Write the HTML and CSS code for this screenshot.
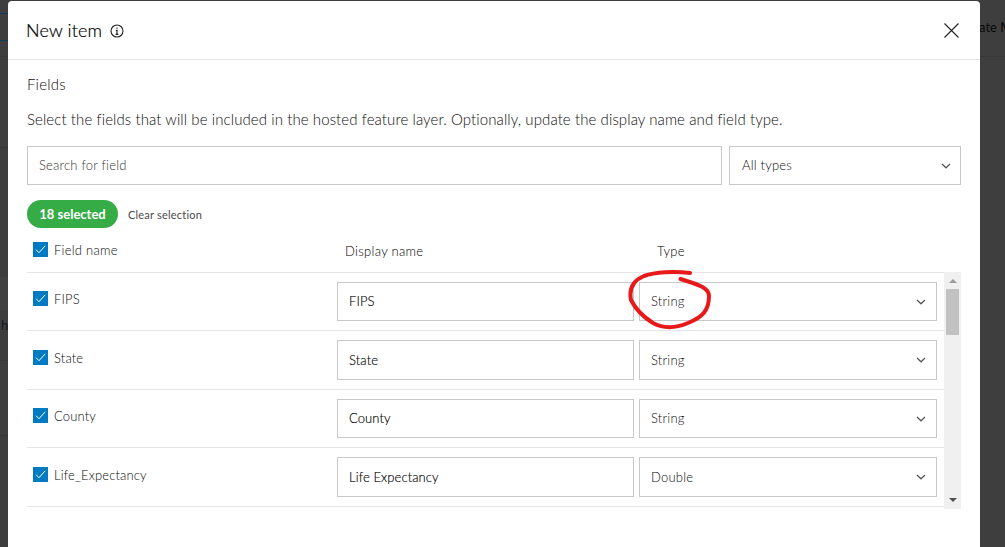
FILE: index.html
```html
<!DOCTYPE html>
<html lang="en">
<head>
<meta charset="utf-8">
<title>New item</title>
<link rel="stylesheet" href="styles.css">
</head>
<body>
<svg class="defs" width="0" height="0">
  <symbol id="chevron" viewBox="0 0 10 6"><path d="M1 1l4 3.8L9 1" fill="none" stroke="#555" stroke-width="1.2"/></symbol>
  <symbol id="check" viewBox="0 0 15 15"><path d="M3 7.7l3 3L12.2 3.8" fill="none" stroke="#fff" stroke-width="1"/></symbol>
</svg>
<div class="page">
  <div class="backdrop-left">
    <i class="rule blue r1"></i><i class="rule blue r2"></i><i class="rule r3"></i><i class="rule r4"></i>
    <i class="band"></i><span class="peek">h</span>
    <i class="rule r5"></i><i class="rule r6"></i>
  </div>
  <main class="modal">
    <header class="head">
      <h1 class="title">New item</h1>
      <svg class="info" width="14" height="14" viewBox="0 0 14 14"><circle cx="7" cy="7" r="6" fill="none" stroke="#222" stroke-width="1.1"/><path d="M7 3.4v1.4M5.800 6.400H7v4M5.600 10.400h2.800" fill="none" stroke="#222" stroke-width="1.2"/></svg>
      <svg class="close" width="15" height="15" viewBox="0 0 15 15"><path d="M.5.5l14 14M14.500.5l-14 14" stroke="#222" stroke-width="1.1"/></svg>
    </header>
    <section class="body">
      <h2 class="subtitle">Fields</h2>
      <p class="desc">Select the fields that will be included in the hosted feature layer. Optionally, update the display name and field type.</p>
      <div class="filters">
        <div class="box search"><span>Search for field</span></div>
        <div class="box types"><span>All types</span><svg class="chev" width="10" height="6"><use href="#chevron"/></svg></div>
      </div>
      <div class="selection"><span class="pill"><span>18 selected</span></span><span class="clear">Clear selection</span></div>
      <div class="cols">
        <div class="name"><span class="cb"><svg width="15" height="15"><use href="#check"/></svg></span><span class="label">Field name</span></div>
        <span class="col-display">Display name</span><span class="col-type">Type</span>
      </div>
      <div class="list">
        <div class="rows">
          <div class="row"><div class="name"><span class="cb"><svg width="15" height="15"><use href="#check"/></svg></span><span>FIPS</span></div><div class="box display"><span>FIPS</span></div><div class="box kind"><span>String</span><svg class="chev" width="10" height="6"><use href="#chevron"/></svg></div></div>
          <div class="row"><div class="name"><span class="cb"><svg width="15" height="15"><use href="#check"/></svg></span><span>State</span></div><div class="box display"><span>State</span></div><div class="box kind"><span>String</span><svg class="chev" width="10" height="6"><use href="#chevron"/></svg></div></div>
          <div class="row"><div class="name"><span class="cb"><svg width="15" height="15"><use href="#check"/></svg></span><span>County</span></div><div class="box display"><span>County</span></div><div class="box kind"><span>String</span><svg class="chev" width="10" height="6"><use href="#chevron"/></svg></div></div>
          <div class="row"><div class="name"><span class="cb"><svg width="15" height="15"><use href="#check"/></svg></span><span>Life_Expectancy</span></div><div class="box display"><span>Life Expectancy</span></div><div class="box kind"><span>Double</span><svg class="chev" width="10" height="6"><use href="#chevron"/></svg></div></div>
        </div>
        <div class="scrollbar"><i class="arrow up"></i><i class="thumb"></i><i class="arrow down"></i></div>
      </div>
    </section>
  </main>
  <div class="backdrop-right"><span class="create">ate M</span><i class="rule r3"></i></div>
</div>
<svg class="marker" width="90" height="66" viewBox="625 266 90 66"><path d="M690 273C674 271 655 272 644 276C632 281 629 290 631 300C636 310 645 318 653 323C664 329 676 328 688 323C703 317 709 310 709 296C709 288 700 285 680.500 279" fill="none" stroke="#e8191b" stroke-width="4" stroke-linecap="round" stroke-linejoin="round"/></svg>
</body>
</html>
```
FILE: styles.css
```css
* { box-sizing: border-box; }
body { margin: 0; overflow: hidden; font-family: Lato, "Open Sans", sans-serif; font-size: 13px; font-weight: 300; color: #0c0c0c; }
.defs { position: absolute; }
.page { display: flex; width: 1005px; height: 547px; background: #3e3e3e; }
.backdrop-left { position: relative; width: 8px; flex: none; overflow: hidden; }
.backdrop-right { position: relative; width: 25px; flex: none; overflow: hidden; }
.rule { position: absolute; left: 0; right: 0; height: 1px; background: #383838; }
.blue { background: #123c58; }
.r1 { top: 13px; } .r2 { top: 40px; } .r3 { top: 56px; } .r4 { top: 147px; } .r5 { top: 360px; } .r6 { top: 435px; }
.band { position: absolute; left: 0; right: 0; top: 277px; height: 33px; background: #414141; }
.peek { position: absolute; left: 1px; top: 317px; line-height: 16px; font-weight: 400; color: #111923; }
.create { position: absolute; left: -1px; top: 19px; line-height: 16px; font-weight: 400; color: #080808; white-space: nowrap; }
.modal { width: 972px; flex: none; margin-top: 1px; background: #fff; border-radius: 4px 4px 0 0; }
.head { display: flex; align-items: center; height: 59px; padding: 0 21px 0 18px; border-bottom: 1px solid #e6e6e6; color: #000; }
.title { margin: 0; width: 75px; font-size: 18px; font-weight: 300; letter-spacing: .15px; line-height: 24px; white-space: nowrap; -webkit-text-stroke: .2px #000; }
.info { margin-left: 9px; margin-top: 1px; }
.close { margin-left: auto; }
.body { padding: 14px 19px 0; }
.subtitle { margin: 0; font-size: 15px; font-weight: 300; line-height: 20px; letter-spacing: .2px; }
.desc { margin: 15px 0 0; font-size: 15px; line-height: 20px; white-space: nowrap; letter-spacing: .093px; }
.filters { display: flex; gap: 7px; margin-top: 17px; }
.box { display: flex; align-items: center; justify-content: space-between; height: 39px; padding: 0 10px 0 11px; border: 1px solid #c8c8c8; background: #fff; letter-spacing: .2px; }
.search { width: 695px; color: #333; }
.types { width: 232px; padding: 0 9px 0 12px; }
.box > span { padding-bottom: 1px; }
.selection { display: flex; align-items: center; gap: 10px; height: 28px; margin-top: 15px; }
.pill { display: flex; align-items: center; justify-content: center; width: 91px; height: 28px; padding-bottom: 1px; border-radius: 14px; background: #35ac46; color: #fff; font-weight: 700; }
.clear { font-size: 11px; font-weight: 400; letter-spacing: .2px; color: #4a4a4a; }
.cols { display: flex; height: 44px; align-items: center; }
.name { display: flex; align-items: center; gap: 6px; width: 310px; padding-left: 6px; letter-spacing: .15px; }
.cb { width: 15px; height: 15px; background: #007ac2; }
.cb svg { display: block; }
.cols .name { padding-bottom: 2px; letter-spacing: .25px; }
.cols .label { padding-top: 2px; }
.col-display { width: 312px; padding: 1px 0 0 8px; letter-spacing: .3px; color: #000; }
.col-type { padding: 1px 0 0 8px; letter-spacing: .2px; color: #000; }
.list { display: flex; height: 237px; width: 934px; }
.rows { width: 917px; border-top: 1px solid #e6e6e6; }
.row { display: flex; align-items: center; height: 58px; border-bottom: 1px solid #e6e6e6; }
.row:nth-child(even) { height: 59px; }
.row .name { padding-bottom: 6px; }
.row .name > span:last-child { padding-top: 1px; }
.row:nth-child(even) .box { height: 40px; }
.display { width: 297px; margin-right: 5px; color: #000; letter-spacing: .1px; -webkit-text-stroke: .15px #000; }
.kind { width: 298px; }
.scrollbar { display: flex; flex-direction: column; align-items: center; width: 17px; background: #f0f0f0; }
.arrow { border: 4px solid transparent; border-top-width: 0; border-bottom: 4px solid #9c9c9c; margin-top: 7px; }
.thumb { width: 13px; height: 46px; margin-top: 6px; background: #c1c1c1; }
.down { margin-top: auto; margin-bottom: 7px; border-bottom-width: 0; border-top: 4px solid #505050; }
.marker { position: absolute; left: 625px; top: 266px; }
```
